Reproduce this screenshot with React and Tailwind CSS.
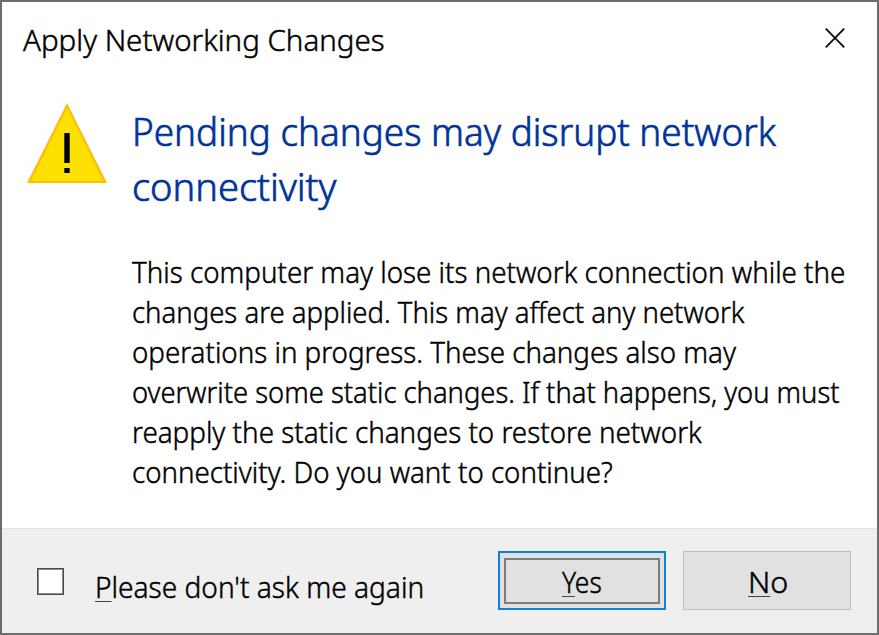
import { useLayoutEffect, useRef, useState } from "react";

// One line of text, condensed horizontally to the given width.
function Line({ width, className = "", children }) {
  const ref = useRef(null);
  const [scale, setScale] = useState(1);
  useLayoutEffect(() => {
    const fit = () => setScale(width / ref.current.offsetWidth);
    fit();
    document.fonts.ready.then(fit);
  }, [width]);
  return (
    <span className={`block whitespace-nowrap ${className}`} style={{ width }}>
      <span ref={ref} className="inline-block origin-left" style={{ transform: `scaleX(${scale})` }}>
        {children}
      </span>
    </span>
  );
}

function Key({ children }) {
  return <span className="underline decoration-[#444] decoration-1 underline-offset-[3px]">{children}</span>;
}

const body = [
  ["This computer may lose its network connection while the", 713.5],
  ["changes are applied. This may affect any network", 612],
  ["operations in progress. These changes also may", 604],
  ["overwrite some static changes. If that happens, you must", 708],
  ["reapply the static changes to restore network", 570],
  ["connectivity. Do you want to continue?", 481],
];

export default function App() {
  return (
    <div className="flex h-[635px] w-[879px] flex-col overflow-hidden border-2 border-[#6d6d6d] bg-white font-['Noto_Sans',sans-serif] text-[29px] font-light leading-[40px] text-black [-webkit-text-stroke:0.45px]">
      <header className="flex justify-between pl-[21px] pr-[30px] pt-[18px]">
        <Line width={362}>Apply Networking Changes</Line>
        <button className="mt-[5px] size-[24px]" aria-label="Close">
          <svg viewBox="0 0 24 24" className="size-6" fill="none" stroke="#111" strokeWidth="1.9">
            <path d="M2.8 3.7 21.2 22.3M21.2 3.7 2.8 22.3" />
          </svg>
        </button>
      </header>

      <main className="flex grow pl-[25px] pt-[42px]">
        <svg viewBox="0 0 80 80" className="mt-px size-20 shrink-0">
          <path d="M40 0 80 80H0Z" fill="#ffbf08" />
          <path d="M40 5 76 78H4Z" fill="#fce100" />
          <path d="M37.3 30h5.4v30h-5.4zM37.3 65h5.4v5h-5.4z" fill="#000" />
        </svg>
        <div className="ml-[25px]">
          <h1 className="pt-px text-[39px] leading-[55px] text-[#003399] [-webkit-text-stroke:0.7px]">
            <Line width={644}>Pending changes may disrupt network</Line>
            <Line width={204}>connectivity</Line>
          </h1>
          <div className="mt-[39px]">
            {body.map(([text, width]) => (
              <Line key={text} width={width}>{text}</Line>
            ))}
          </div>
        </div>
      </main>

      <footer className="flex h-[105px] shrink-0 items-start border-t border-[#e3e3e3] bg-[#efefef] pl-[35px]">
        <label className="flex w-[461px] items-start">
          <span className="mt-[39px] size-[27px] border border-[#4a4a4a] bg-white">
            <span className="block size-full border border-[#8a8a8a]" />
          </span>
          <Line width={329} className="ml-[31px] mt-[38px]"><Key>P</Key>lease don't ask me again</Line>
        </label>
        <button className="mt-[22px] flex h-[59px] w-[168px] items-center justify-center border-2 border-[#0f80dc] bg-[#e1e1e1]">
          <span className="flex h-[46px] w-[156px] justify-center border-2 border-[#7c7c7c] pt-[2px]">
            <Line width={40}><Key>Y</Key>es</Line>
          </span>
        </button>
        <button className="ml-[17px] mt-[22px] flex h-[59px] w-[168px] justify-center border border-[#bdbdbd] bg-[#e1e1e1] pt-[10px]">
          <Line width={40}><Key>N</Key>o</Line>
        </button>
      </footer>
    </div>
  );
}
